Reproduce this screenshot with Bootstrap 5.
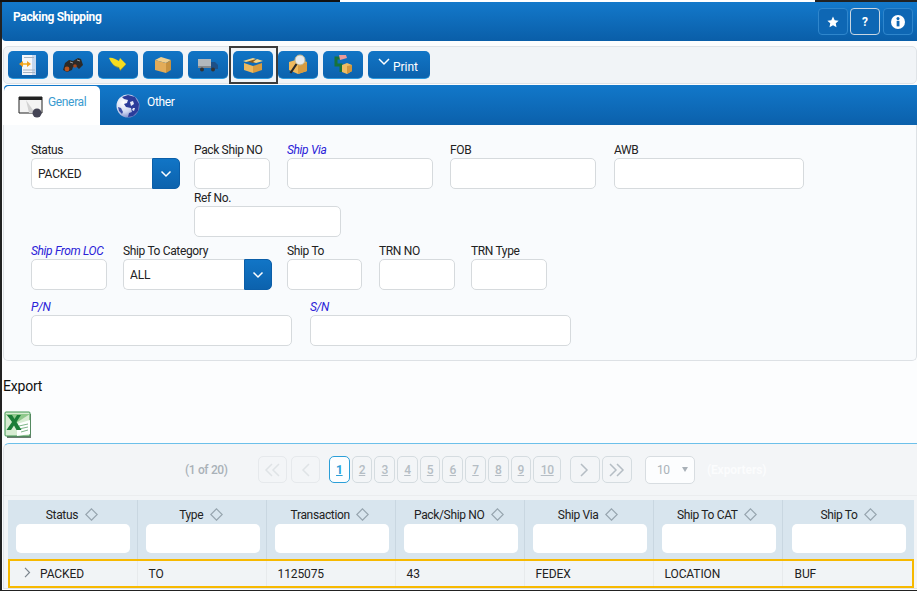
<!DOCTYPE html>
<html lang="en"><head><meta charset="utf-8"><title>Packing Shipping</title>
<link href="https://cdn.jsdelivr.net/npm/bootstrap@5.3.0/dist/css/bootstrap.min.css" rel="stylesheet">
<style>
html,body{height:591px;overflow:hidden}
body{background:#fcfdfe;font-family:Roboto,"Liberation Sans",sans-serif;font-size:12px;color:#222;letter-spacing:-.35px}
.topline{height:2px;background:linear-gradient(90deg,#111 340px,#fff 340px,#fff 815px,#222 815px)}
.shell{border-left:2px solid #222;height:588px;position:relative}
.botline{height:1px;background:#222}
.appbar{height:39px;background:linear-gradient(#1379cb,#0a5ea8);color:#fff;border-radius:0 0 0 4px;padding:0 4px 0 11px}
.appbar h1{font-size:12px;font-weight:700;margin:8px 0 0}
.topset{padding-top:6px}
.topbtn{width:30px;height:27px;padding:0;border:1px solid #2f86cc;border-radius:4px;background:#0e67b4;color:#fff;font-size:12px;font-weight:700;line-height:1;margin-left:2px}
.topbtn:last-child{margin-left:3px}
.topbtn.act{border-color:#c9d6e2}
.topbtn svg{display:block;margin:auto}
.toolstrip{height:38px;margin:5px 0 0 1px;background:#f1f4f7;border:1px solid #dfe3e7;border-radius:5px;padding:4px 0 0 4px;gap:5px;position:relative}
.toolbtn{width:40px;height:28px;padding:0;background:linear-gradient(#1175c6,#0c62ad);border:0;border-bottom:1px solid #2a9adf;border-radius:5px;color:#fff;display:flex;align-items:center;justify-content:center}
.toolbtn.wide{width:62px;font-size:12px;gap:3px;padding-right:2px}
.toolbtn.wide svg{margin-top:-6px}
.toolbtn.wide span{margin-top:5px}
.focusbox{position:absolute;left:225px;top:-1px;width:49px;height:38px;border:2px solid #3c3c3c;pointer-events:none}
.tabbar{height:40px;margin:1px 0 0 2px;background:linear-gradient(#1278ca,#0b60ab);border-radius:4px 0 0 0;padding:1px 0 0 0}
.tabitem{height:39px;display:flex;padding:8px 0 0 14px;color:#fff;font-size:12px}
.tabitem.on{width:96px;background:#fff;border-radius:5px 5px 0 0;color:#3a9bd0;gap:5px}
.tabitem.off{padding-left:16px;gap:7px}
.tabitem span{margin-top:-1px}
.formbox{height:236px;margin-left:1px;background:#f9fbfd;border:1px solid #dde1e5;border-top:0;border-radius:0 0 5px 5px;padding:18px 0 0 27px}
.fld label{display:block;line-height:14px;height:15px;margin:0;white-space:nowrap}
.fld label.blue{color:#2a22d8;font-style:italic}
.fld .form-control{height:31px;border-radius:5px;border:1px solid #d6dadd;padding:0 6px;font-size:12px;background:#fff;box-shadow:none;color:#222;letter-spacing:-.2px}
.pick{display:flex;height:31px}
.pick .form-control{border-radius:5px 0 0 5px;border-right:0;flex:1;min-width:0}
.pick button{width:28px;padding:0;border:1px solid #0b5ea8;border-radius:0 5px 5px 0;background:linear-gradient(#1175c6,#0c62ad);display:flex;align-items:center;justify-content:center}
.w75{width:75px}.w76{width:76px}.w146{width:146px}.w149{width:149px}.w147{width:147px}.w190{width:190px}.w261{width:261px}
.g1{gap:17px}.g0{gap:16px}.g14{gap:14px}.g18{gap:18px}
.rowa{height:87px}
.rowa1{height:48px}
.rowb{height:56px;margin-top:14px}
.nudge{margin-left:-1px}
.awbfield{margin-left:1px}
.exlabel{font-size:14px;color:#111;margin:16px 0 0 1px;line-height:18px;letter-spacing:-.2px}
.xlicon{margin:16px 0 0 2px;display:block}
.gridpanel{margin:5px 0 0 1px;background:#f3f5f7;border:1px solid #dfe3e7;border-top:1px solid #6cc0ea;border-right:0;border-radius:6px 0 0 0;height:146px;padding:0 2px 0 4px}
.pagerline{height:52px;border-bottom:1px solid #ebedef;gap:2px;color:#a9b1b8;padding:0 0 0 181px;margin:0 -2px 0 -4px}
.pg{height:27px;width:20.7px;padding:0;display:flex;align-items:center;justify-content:center;background:#f3f5f7;border:1px solid #d5dce0;border-radius:5px;color:#b5bdc4;font-size:12px;flex:none;font-weight:500}
.pg.now{border-color:#2b9fd8;color:#2b9fd8;background:#fdfeff;font-weight:700}
.pg.nav-a{width:29px}
.pg.first{margin-right:2px}
.pg.prev{margin-right:7px}
.pg.ten{width:28px;margin-right:6.7px}
.pg.next,.pg.last{width:30px}
.pg.dim{border-color:#e6e9ec;color:#dfe3e6}
.countlabel{margin-right:23px;width:48px;white-space:nowrap;font-size:12px;color:#a9b1b8;font-weight:500}
.sizepick{width:50px;height:28px;border:1px solid #d8dde1;border-radius:5px;background:#fcfdfe;color:#aab2b9;display:flex;align-items:center;justify-content:space-between;padding:0 6px 0 11px;margin:0 10px 0 11px;flex:none}
.sizepick i{width:0;height:0;border:3.5px solid transparent;border-top:5px solid #a9b1b8;border-bottom:0}
.exptext{color:#fbfcfd;font-weight:700;font-size:12px;letter-spacing:-.1px}
.datatable{table-layout:fixed;width:906px;margin:4px 0 0 0;border-collapse:collapse}
.datatable th{width:129px;background:#d8e5ee;height:59px;padding:8px 8px 0 7px;font-weight:400;text-align:center;border:0;border-right:1px solid #c9d7e1;vertical-align:top;color:#222;font-size:12px;line-height:14px}
.datatable th .form-control{height:29px;border:0;border-radius:5px;margin:2px -1px 0 1px;width:114px;background:#fff;font-size:12px}
.datatable th:last-child{border-right:0;width:auto;padding-left:9px}
.datatable th:last-child .form-control{margin-left:0}
.datatable th svg{vertical-align:-2px;margin-left:4px}
.datatable td{height:29px;background:#f1f4f6;padding:0 10px 0 11px;border:0;border-right:1px solid #e7eaec;vertical-align:middle;color:#222;font-size:12px;letter-spacing:-.1px}
.datatable td:last-child{border-right:0;padding-left:12px}
.hitrow{outline:2px solid #f7b900;outline-offset:-2px}
.hitrow td:first-child{padding-left:16px}
.hitrow svg{margin-right:9px;vertical-align:0}
</style></head>
<body>
<div class="topline"></div>
<div class="shell">
 <div class="appbar d-flex justify-content-between">
  <h1>Packing Shipping</h1>
  <div class="d-flex align-items-start topset">
   <button class="btn topbtn" aria-label="Favourite"><svg width="12" height="12" viewBox="0 0 24 24"><path fill="#fff" d="M12 1l3.400 7.300 7.900 1-5.800 5.400 1.500 7.900L12 18.700l-7 3.900 1.500-7.900L.7 9.300l7.900-1z"/></svg></button>
   <button class="btn topbtn act">?</button>
   <button class="btn topbtn" aria-label="Info"><svg width="14" height="14" viewBox="0 0 24 24"><circle cx="12" cy="12" r="12" fill="#fff"/><rect x="9.700" y="10" width="4.800" height="9.500" fill="#0e67b4"/><circle cx="12" cy="6.200" r="2.600" fill="#0e67b4"/></svg></button>
  </div>
 </div>

 <div class="toolstrip d-flex">
  <button class="btn toolbtn" aria-label="Report"><svg width="20" height="24" viewBox="0 0 20 24"><path fill="#f3f6fa" d="M4 2h14v20H4z"/><path fill="#c4d8ef" d="M14 2h4v20h-4z"/><path stroke="#a7b4c2" d="M5 17h12M5 19.500h12M6 4.500h10"/><path fill="#f0a020" d="M1 11l4-3v6zM9 8l4 3-4 3z"/><path fill="#f6c04a" d="M5 10h4v2H5z"/></svg></button>
  <button class="btn toolbtn" aria-label="Search"><svg width="22" height="16" viewBox="0 0 22 16"><path fill="#2c2a28" d="M7 3l4 1 5-3 3 1 2 6-4 4-3-3-3 1-1 3-5 2-4-2 2-7z"/><circle cx="5" cy="12" r="2.400" fill="#b8541f"/><circle cx="13" cy="9" r="1.800" fill="#a8481c"/><path stroke="#9a9a9a" d="M8 5l3 1M15 3l3 1"/></svg></button>
  <button class="btn toolbtn" aria-label="Return"><svg width="18" height="15" viewBox="0 0 18 15"><path fill="#b59a10" d="M1 3c2 5 6 8 10 8l0 3 6-6.500-1-.5-5 6-1-3C6 10 3 7 1 3z"/><path fill="#f6dc1e" d="M0 1C3 0 6 2 10 4l1-3 6 6-6 6-1-3C6 10 2 6 0 1z"/></svg></button>
  <button class="btn toolbtn" aria-label="Box"><svg width="18" height="19" viewBox="0 0 18 19"><path fill="#f0cf8e" d="M1 5l6-3 10 3-5 3z"/><path fill="#e3ac58" d="M1 5l11 3v10L1 15z"/><path fill="#c8923f" d="M12 8l5-3v10l-5 3z"/></svg></button>
  <button class="btn toolbtn" aria-label="Truck"><svg width="20" height="14" viewBox="0 0 20 14"><path fill="#b2b8bc" d="M0 1h13v9H0z"/><path fill="#83898e" d="M0 8h13v2H0z"/><path fill="#1d4f86" d="M13 4h4l3 3v4h-7z"/><circle cx="4" cy="11.500" r="2" fill="#333"/><circle cx="15" cy="11.500" r="2" fill="#333"/></svg></button>
  <button class="btn toolbtn" aria-label="Open box"><svg width="20" height="16" viewBox="0 0 20 16"><path fill="#8a5d20" d="M3 4l7-2 7 2-7 2z"/><path fill="#f5d488" d="M0 4l10-3 3 1-10 3zM20 4l-7 2-3-1 4-3z"/><path fill="#edb95e" d="M1 6l9 3v7l-9-3z"/><path fill="#d89c40" d="M10 9l9-3v7l-9 3z"/></svg></button>
  <button class="btn toolbtn" aria-label="Find box"><svg width="22" height="22" viewBox="0 0 22 22"><path fill="#edb95e" d="M2 8l10-3 8 3v9l-9 3-9-4z"/><path fill="#d89c40" d="M11 11l9-3v9l-9 3z"/><circle cx="13" cy="6" r="5" fill="#e6eaec" stroke="#c2b78e"/><path stroke="#2a2a2a" stroke-width="2.200" d="M9.500 10l-6 9"/></svg></button>
  <button class="btn toolbtn" aria-label="Pack"><svg width="20" height="21" viewBox="0 0 20 21"><path fill="none" stroke="#17733a" stroke-width="3" d="M8 4H3v7h5v7"/><path fill="#e79a9a" d="M6 1h7l1 3-7 2z"/><path fill="#eebc62" d="M9 11l5-2 5 2v6l-5 3-5-2z"/><path fill="#d2963c" d="M14 12l5-1v6l-5 3z"/></svg></button>
  <button class="btn toolbtn wide"><svg width="12" height="8" viewBox="0 0 12 8"><path fill="none" stroke="#fff" stroke-width="1.500" d="M1 1l5 5 5-5"/></svg><span>Print</span></button>
  <div class="focusbox"></div>
 </div>

 <div class="tabbar d-flex">
  <div class="tabitem on"><svg width="25" height="24" viewBox="0 0 25 24"><path fill="#f4f4f4" stroke="#222" d="M1 3h23v16H1z"/><path fill="#222" d="M1 3h23v3H1z"/><path fill="#d2d2d2" d="M8 6l9 13h-6z"/><circle cx="19" cy="19" r="4.500" fill="#445"/></svg><span>General</span></div>
  <div class="tabitem off"><svg width="24" height="24" viewBox="0 0 24 24"><defs><radialGradient id="globe" cx=".3" cy=".35" r=".85"><stop offset="0" stop-color="#fff"/><stop offset=".5" stop-color="#cdd6f0"/><stop offset="1" stop-color="#4a5cb0"/></radialGradient></defs><circle cx="12" cy="12" r="11.500" fill="url(#globe)"/><path fill="#2b3c9a" d="M6 3l6-2 7 2 4 7-1 7-5 5-5 1 1-4 3-1-1-4-5-1-2-3 3-1 1-3-4-1z"/><path fill="#e6ebf8" d="M14 8l3-1 1 3-3 2zM17 14l2 0-1 3-2-1z"/><path fill="#3a4da6" d="M2 13l3 1 2 4-1 2-3-3z"/></svg><span>Other</span></div>
 </div>

 <form class="formbox">
  <div class="d-flex rowa g14">
   <div class="fld w149"><label>Status</label><div class="pick"><input class="form-control" value="PACKED"><button type="button" aria-label="Open"><svg width="12" height="8" viewBox="0 0 12 8"><path fill="none" stroke="#fff" stroke-width="1.500" d="M1.500 1.500L6 6l4.500-4.500"/></svg></button></div></div>
   <div>
    <div class="d-flex g1 rowa1">
     <div class="fld w76"><label>Pack Ship NO</label><input class="form-control"></div>
     <div class="fld w146"><label class="blue">Ship Via</label><input class="form-control"></div>
     <div class="fld w146"><label>FOB</label><input class="form-control"></div>
     <div class="fld w190 awbfield"><label>AWB</label><input class="form-control"></div>
    </div>
    <div class="fld w147"><label>Ref No.</label><input class="form-control"></div>
   </div>
  </div>
  <div class="d-flex rowb g0">
   <div class="fld w76"><label class="blue">Ship From LOC</label><input class="form-control"></div>
   <div class="fld w149"><label>Ship To Category</label><div class="pick"><input class="form-control" value="ALL"><button type="button" aria-label="Open"><svg width="12" height="8" viewBox="0 0 12 8"><path fill="none" stroke="#fff" stroke-width="1.500" d="M1.500 1.500L6 6l4.500-4.500"/></svg></button></div></div>
   <div class="d-flex g1 nudge">
    <div class="fld w75"><label>Ship To</label><input class="form-control"></div>
    <div class="fld w76"><label>TRN NO</label><input class="form-control"></div>
    <div class="fld w76 nudge"><label>TRN Type</label><input class="form-control"></div>
   </div>
  </div>
  <div class="d-flex g18">
   <div class="fld w261"><label class="blue">P/N</label><input class="form-control"></div>
   <div class="fld w261"><label class="blue">S/N</label><input class="form-control"></div>
  </div>
 </form>

 <div class="exlabel">Export</div>
 <svg class="xlicon" width="27" height="27" viewBox="0 0 27 27" role="img" aria-label="Excel"><path fill="#6b7d70" d="M3 3h24v24H3z"/><rect x="1" y="1" width="25" height="24" rx="1" fill="#d7ecd2" stroke="#3e9650"/><path fill="#8ec98c" d="M1 3h25L12 12z"/><path fill="#fff" d="M13 13l13-4v14l-13 2z"/><path stroke="#7fb58a" d="M15 15l9-2M15 18l9-2M17 21l7-2"/><path fill="#1b7d38" d="M3 4h5l2.500 4L13 4h4l-4.500 7 5 8h-5L10 14.500 7 19H2.500l5.500-8z"/></svg>

 <div class="gridpanel">
  <div class="pagerline d-flex align-items-center">
   <span class="countlabel">(1 of 20)</span>
   <a class="pg nav-a first dim" aria-label="First"><svg width="17" height="14" viewBox="0 0 17 14"><path fill="none" stroke="currentColor" stroke-width="1.500" d="M8 1L2 7l6 6M15 1L9 7l6 6"/></svg></a>
   <a class="pg nav-a prev dim" aria-label="Previous"><svg width="9" height="14" viewBox="0 0 9 14"><path fill="none" stroke="currentColor" stroke-width="1.500" d="M8 1L2 7l6 6"/></svg></a>
   <a class="pg now">1</a><a class="pg">2</a><a class="pg">3</a><a class="pg">4</a><a class="pg">5</a><a class="pg">6</a><a class="pg">7</a><a class="pg">8</a><a class="pg">9</a><a class="pg ten">10</a>
   <a class="pg next" aria-label="Next"><svg width="9" height="14" viewBox="0 0 9 14"><path fill="none" stroke="currentColor" stroke-width="1.500" d="M1 1l6 6-6 6"/></svg></a>
   <a class="pg last" aria-label="Last"><svg width="17" height="14" viewBox="0 0 17 14"><path fill="none" stroke="currentColor" stroke-width="1.500" d="M2 1l6 6-6 6M9 1l6 6-6 6"/></svg></a>
   <div class="sizepick">10<i></i></div>
   <span class="exptext">(Exporters)</span>
  </div>
  <table class="datatable">
   <thead><tr>
    <th>Status <svg width="13" height="13" viewBox="0 0 13 13"><path fill="none" stroke="#97a5af" stroke-width="1.200" d="M6.500 .8l5.700 5.700-5.700 5.700L.8 6.500z"/></svg><input class="form-control"></th>
    <th>Type <svg width="13" height="13" viewBox="0 0 13 13"><path fill="none" stroke="#97a5af" stroke-width="1.200" d="M6.500 .8l5.700 5.700-5.700 5.700L.8 6.500z"/></svg><input class="form-control"></th>
    <th>Transaction <svg width="13" height="13" viewBox="0 0 13 13"><path fill="none" stroke="#97a5af" stroke-width="1.200" d="M6.500 .8l5.700 5.700-5.700 5.700L.8 6.500z"/></svg><input class="form-control"></th>
    <th>Pack/Ship NO <svg width="13" height="13" viewBox="0 0 13 13"><path fill="none" stroke="#97a5af" stroke-width="1.200" d="M6.500 .8l5.700 5.700-5.700 5.700L.8 6.500z"/></svg><input class="form-control"></th>
    <th>Ship Via <svg width="13" height="13" viewBox="0 0 13 13"><path fill="none" stroke="#97a5af" stroke-width="1.200" d="M6.500 .8l5.700 5.700-5.700 5.700L.8 6.500z"/></svg><input class="form-control"></th>
    <th>Ship To CAT <svg width="13" height="13" viewBox="0 0 13 13"><path fill="none" stroke="#97a5af" stroke-width="1.200" d="M6.500 .8l5.700 5.700-5.700 5.700L.8 6.500z"/></svg><input class="form-control"></th>
    <th>Ship To <svg width="13" height="13" viewBox="0 0 13 13"><path fill="none" stroke="#97a5af" stroke-width="1.200" d="M6.500 .8l5.700 5.700-5.700 5.700L.8 6.500z"/></svg><input class="form-control"></th>
   </tr></thead>
   <tbody><tr class="hitrow">
    <td><svg width="7" height="11" viewBox="0 0 7 11"><path fill="none" stroke="#7b858d" stroke-width="1.200" d="M1 .8l4.500 4.700L1 10.200"/></svg>PACKED</td><td>TO</td><td>1125075</td><td>43</td><td>FEDEX</td><td>LOCATION</td><td>BUF</td>
   </tr></tbody>
  </table>
 </div>
</div>
<div class="botline"></div>
<script src="https://cdn.jsdelivr.net/npm/bootstrap@5.3.0/dist/js/bootstrap.bundle.min.js"></script>
</body></html>
